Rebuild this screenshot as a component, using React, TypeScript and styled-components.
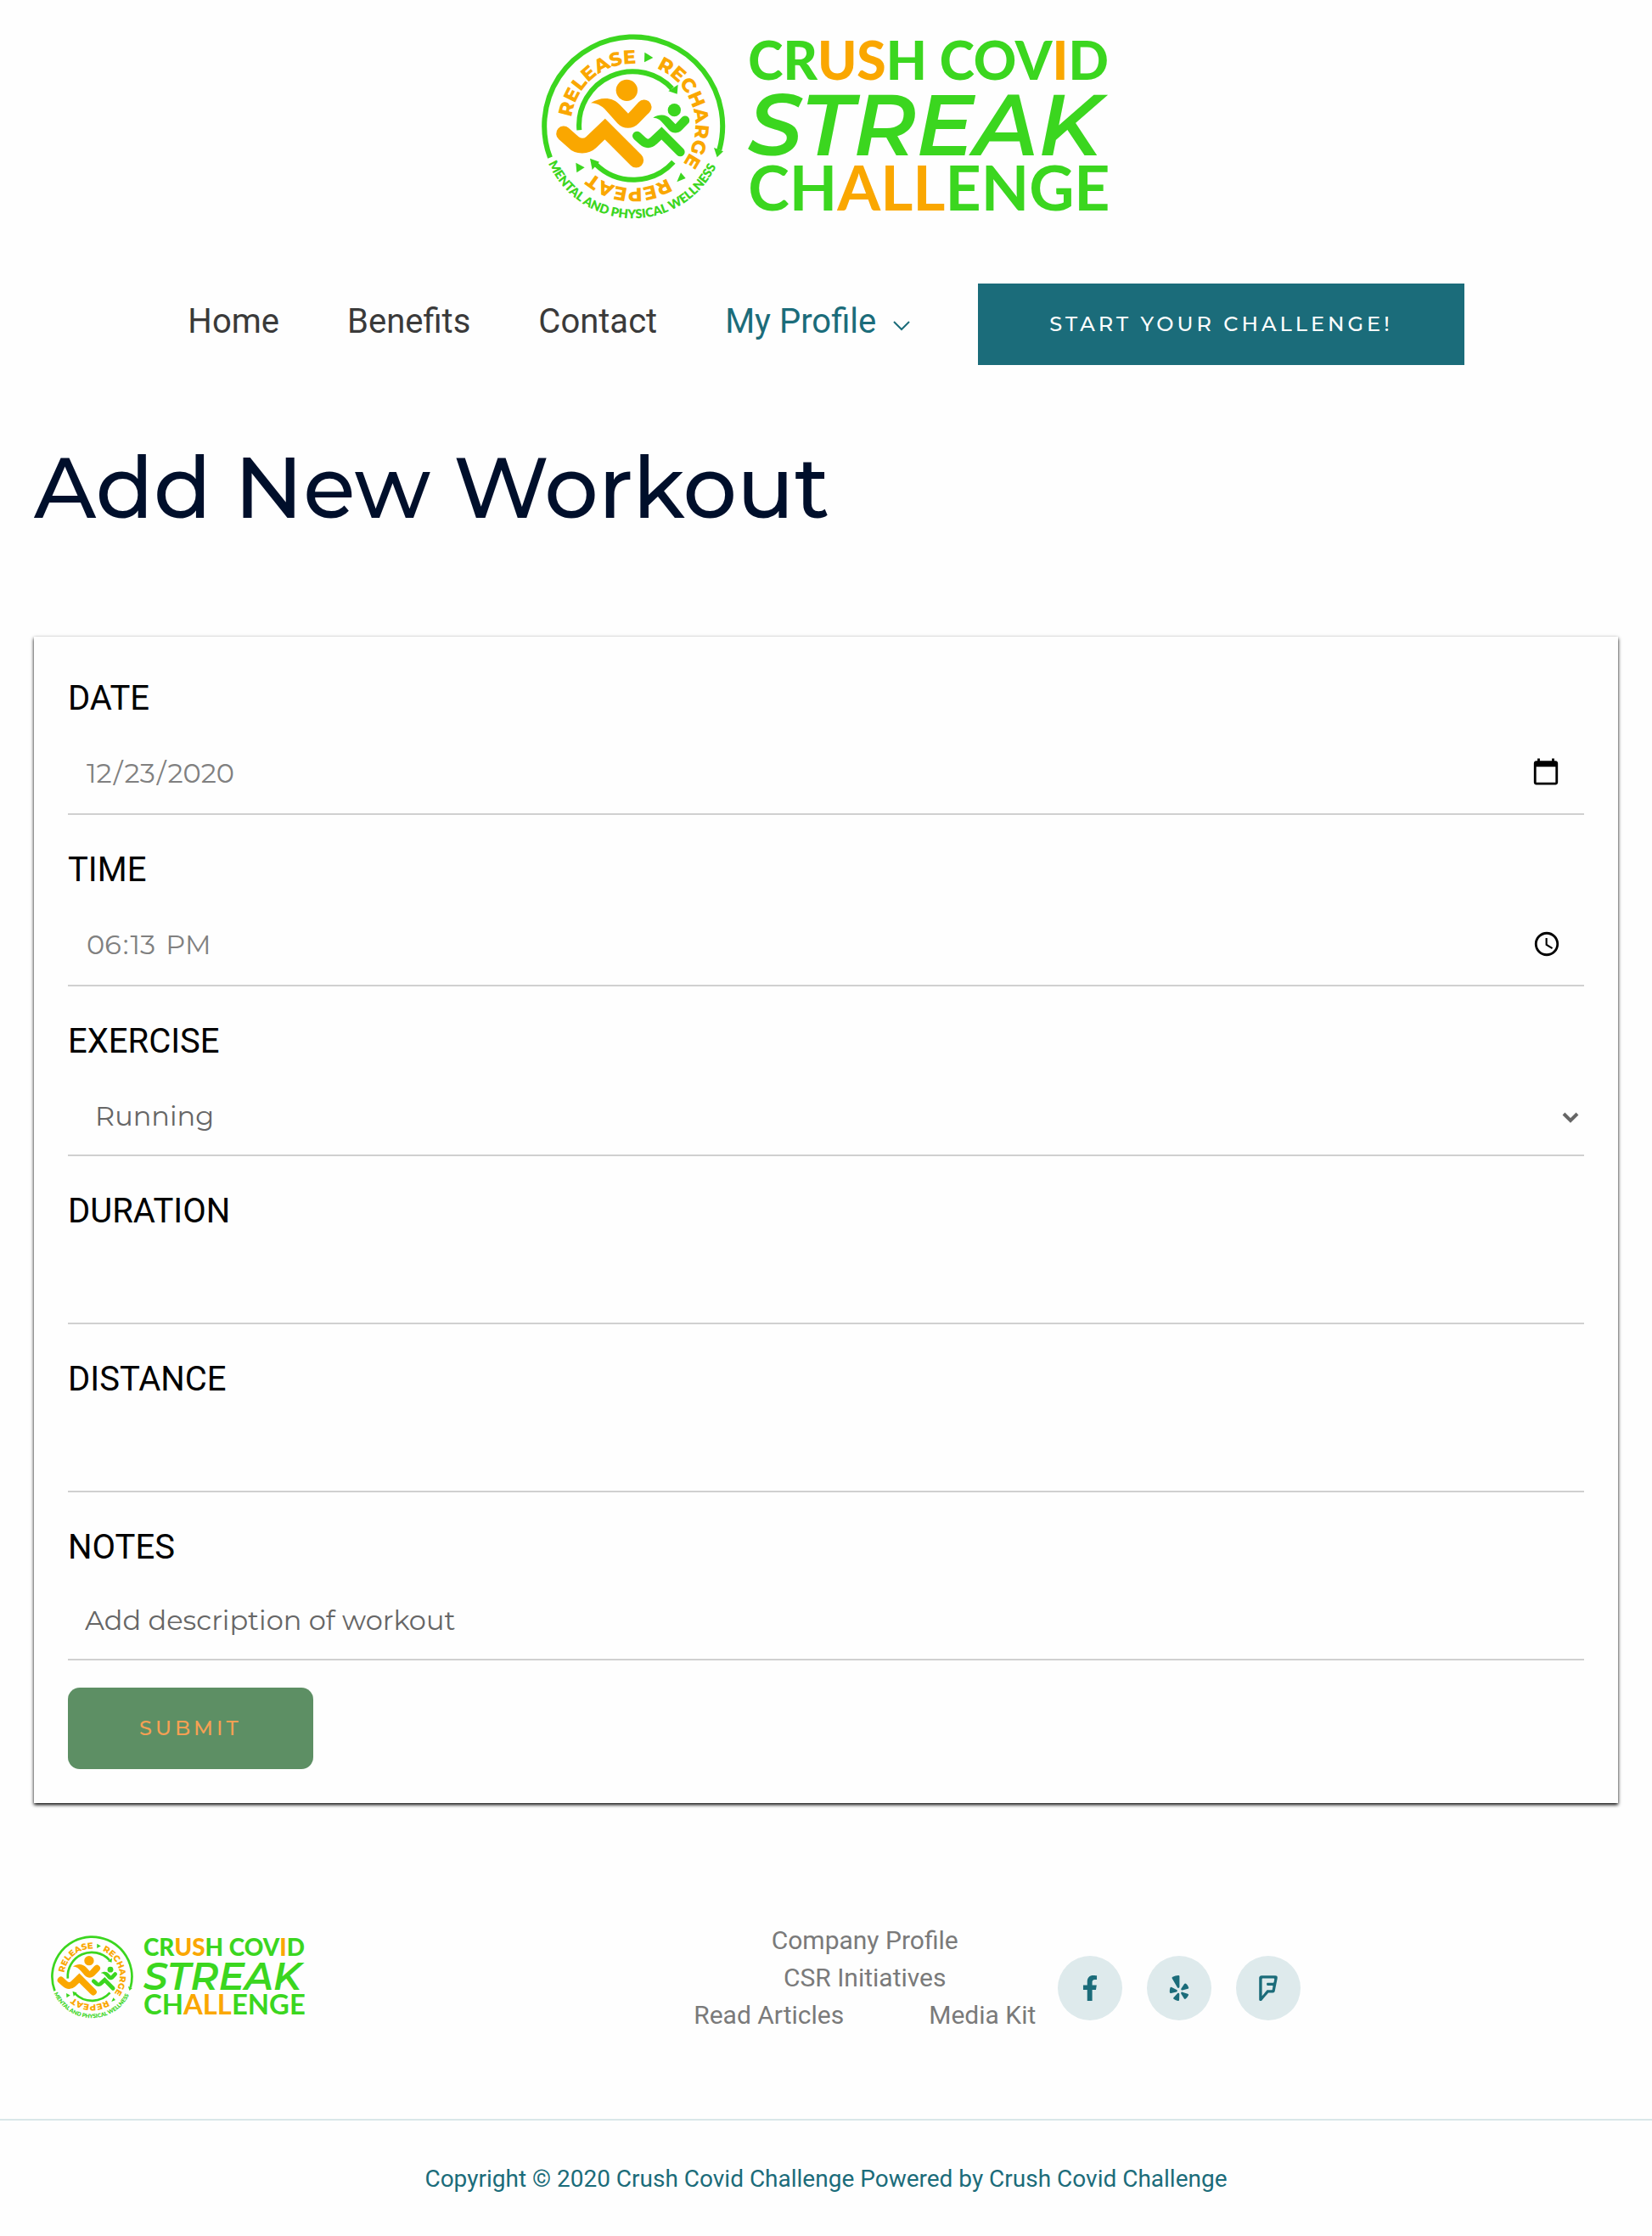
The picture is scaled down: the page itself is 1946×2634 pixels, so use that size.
import React from "react";
import styled, { createGlobalStyle, css } from "styled-components";
import { FaFacebookF, FaFoursquare, FaYelp } from "react-icons/fa";

const teal = "#1b6c7a";
const green = "#3bd61f";
const orange = "#faa700";
const bodyFont = `Roboto, "Liberation Sans", sans-serif`;
const displayFont = `Montserrat, Inter, "Liberation Sans", sans-serif`;

const GlobalStyle = createGlobalStyle`
  *, *::before, *::after { box-sizing: border-box; }
  body {
    margin: 0;
    background: #fefefe;
    color: #3a3a3a;
    font-family: ${bodyFont};
  }
`;

const Header = styled.header`
  display: flex;
  flex-direction: column;
  align-items: center;
  gap: 76px;
  padding-top: 40px;
`;

const LogoLink = styled.a<{ $width: number }>`
  display: block;
  width: ${(p) => p.$width}px;
  max-width: 100%;
  svg { display: block; width: 100%; height: auto; overflow: visible; }
`;

const Nav = styled.nav`
  display: flex;
  flex-wrap: wrap;
  justify-content: center;
  align-items: flex-start;
  gap: 0 80px;
`;

const NavLink = styled.a<{ $active?: boolean }>`
  display: inline-flex;
  align-items: center;
  gap: 20px;
  font-size: 40px;
  line-height: 90px;
  color: ${(p) => (p.$active ? teal : "#3a3a3a")};
  text-decoration: none;
  svg { margin-top: 10px; }
`;

const buttonText = css`
  height: 96px;
  padding: 0 84px;
  border: 0;
  font-family: ${displayFont};
  font-size: 24px;
  font-weight: 500;
  letter-spacing: 4px;
  line-height: 96px;
  text-transform: uppercase;
`;

const CallToAction = styled.a`
  ${buttonText}
  background: ${teal};
  color: #fff;
  text-decoration: none;
`;

const Main = styled.main`
  padding: 0 40px;
`;

const Title = styled.h1`
  margin: 0;
  padding: 84px 0 116px;
  font-family: ${displayFont};
  font-size: 100px;
  font-weight: 500;
  line-height: 120px;
  color: #000f2b;
`;

const Card = styled.form`
  display: flex;
  flex-direction: column;
  gap: 32px;
  padding: 40px;
  background: #fefefe;
  box-shadow: 0 2px 4px #000;
`;

const Field = styled.div`
  display: flex;
  flex-direction: column;
`;

const Label = styled.label`
  font-size: 40px;
  line-height: 66px;
  color: #000;
`;

const controlStyle = css`
  width: 100%;
  border: 0;
  border-bottom: 2px solid #d0d0d0;
  border-radius: 0;
  outline: 0;
  background: transparent;
  font-family: ${displayFont};
  font-size: 32px;
  font-weight: 400;
  color: #666;
`;

const Input = styled.input`
  ${controlStyle}
  height: 100px;
  padding: 6px 20px 0;
  &::placeholder { color: #666; opacity: 1; }
`;

const PickerInput = styled(Input)<{ $icon: number }>`
  height: 104px;
  color: #808080;
  &::-webkit-datetime-edit-month-field,
  &::-webkit-datetime-edit-day-field,
  &::-webkit-datetime-edit-year-field,
  &::-webkit-datetime-edit-hour-field,
  &::-webkit-datetime-edit-minute-field {
    padding: 0 2px;
  }
  &::-webkit-datetime-edit-ampm-field {
    padding: 0 2px 0 6px;
  }
  &::-webkit-calendar-picker-indicator {
    width: ${(p) => p.$icon}px;
    height: ${(p) => p.$icon}px;
    padding: 0;
    margin-right: 7px;
    background-size: contain;
  }
`;

const SelectWrap = styled.div`
  position: relative;
  svg {
    position: absolute;
    right: 6px;
    top: 49px;
    pointer-events: none;
  }
`;

const Select = styled.select`
  ${controlStyle}
  display: block;
  height: 102px;
  padding: 8px 32px 0;
  appearance: none;
`;

const Submit = styled.button`
  ${buttonText}
  align-self: flex-start;
  border-radius: 14px;
  background: #5d8f64;
  color: #f5a053;
`;

const FooterTop = styled.div`
  display: grid;
  grid-template-columns: 8fr 454px 7fr;
  align-items: start;
  padding: 140px 60px 100px;
`;

const FooterLogo = styled.div`
  padding-top: 16px;
`;

const FooterMenu = styled.nav`
  display: flex;
  flex-wrap: wrap;
  justify-content: center;
  column-gap: 100px;
`;

const FooterLink = styled.a`
  font-size: 30px;
  line-height: 44px;
  color: #7a7a7a;
  text-decoration: none;
`;

const Social = styled.div`
  display: flex;
  gap: 29px;
  padding-top: 40px;
`;

const SocialLink = styled.a`
  display: flex;
  align-items: center;
  justify-content: center;
  width: 76px;
  height: 76px;
  border-radius: 50%;
  background: #deeaec;
  color: ${teal};
  font-size: 30px;
`;

const Copyright = styled.p`
  margin: 0;
  padding: 46px 40px 44px;
  border-top: 2px solid #d9e7e9;
  text-align: center;
  font-size: 28px;
  line-height: 46px;
  color: ${teal};
`;

const Word = styled.text`
  font-family: Lato, sans-serif;
  fill: ${green};
`;

const SlantedWord = styled(Word)`
  font-family: ${displayFont};
  font-size: 304px;
  font-style: italic;
  font-weight: 600;
`;

const Tint = styled.tspan`
  fill: ${orange};
`;

const RingWord = styled.text`
  font-family: ${displayFont};
  font-size: 68px;
  font-weight: 800;
  fill: ${orange};
`;

const Motto = styled.text`
  font-family: Lato, sans-serif;
  font-size: 44px;
  font-weight: 800;
  fill: ${green};
`;

const armPath =
  "M228 304C262 281 306 281 332 312L360 341L397 301A26 26 0 0 1 436 336L397 376C375 398 343 398 322 376L290 340C272 318 256 305 228 304Z";

function Logo({ id }: { id: string }) {
  return (
    <svg viewBox="54 60 2010 654" role="img" aria-label="Crush Covid Streak Challenge">
      <defs>
        <path id={`${id}-a`} d="M160 355A220 220 0 0 1 596 355" />
        <path id={`${id}-b`} d="M460 181A220 220 0 0 1 498 569" />
        <path id={`${id}-c`} d="M498 569A220 220 0 0 1 158 385" />
        <path id={`${id}-d`} d="M78 517A327 327 0 0 0 690 480" />
      </defs>
      <g fill="none" stroke={green} strokeWidth="18">
        <path d="M84 497A315 315 0 1 1 682 470" />
        <path d="M187 400A190 190 0 0 1 515 253" />
        <path d="M520 512A190 190 0 0 1 245 520" />
      </g>
      <g fill={green}>
        <path d="M663 462L696 475L674 496Z" />
        <path d="M533 272L536 239L502 262Z" />
        <path d="M225 500L258 512L233 540Z" />
        <path d="M418 125L448 144L417 160Z" />
        <path d="M175 515L206 532L178 550Z" />
        <path d="M546 550L532 583L563 570Z" />
        <circle cx="523" cy="329" r="23" />
        <path d={armPath} transform="translate(311 174) scale(0.6)" />
      </g>
      <path
        d="M391 420L412 439C422 449 438 449 448 439L478 411L544 477"
        fill="none"
        stroke={green}
        strokeWidth="32"
        strokeLinecap="round"
      />
      <circle cx="355" cy="259" r="38" fill={orange} />
      <path d={armPath} fill={orange} />
      <path
        d="M132 412L166 442C182 459 212 459 229 443L278 396L388 506"
        fill="none"
        stroke={orange}
        strokeWidth="53"
        strokeLinecap="round"
      />
      <RingWord><textPath href={`#${id}-a`}>RELEASE</textPath></RingWord>
      <RingWord><textPath href={`#${id}-b`}>RECHARGE</textPath></RingWord>
      <RingWord><textPath href={`#${id}-c`}>REPEAT</textPath></RingWord>
      <Motto><textPath href={`#${id}-d`}>MENTAL AND PHYSICAL WELLNESS</textPath></Motto>
      <Word x="784" y="222" fontSize="187" fontWeight="900">
        CR<Tint>US</Tint>H COV<Tint>I</Tint>D
      </Word>
      <SlantedWord x="784" y="488">STREAK</SlantedWord>
      <Word x="784" y="683" fontSize="220" fontWeight="700">
        CH<Tint>ALL</Tint>ENGE
      </Word>
    </svg>
  );
}

export default function App() {
  return (
    <>
      <GlobalStyle />
      <Header>
        <LogoLink href="#" $width={670}><Logo id="header" /></LogoLink>
        <Nav aria-label="Main">
          <NavLink href="#">Home</NavLink>
          <NavLink href="#">Benefits</NavLink>
          <NavLink href="#">Contact</NavLink>
          <NavLink href="#" $active>
            My Profile
            <svg width="20" height="12" viewBox="0 0 20 12" fill="none" stroke="currentColor" strokeWidth="2">
              <path d="M1 1L10 10L19 1" />
            </svg>
          </NavLink>
          <CallToAction href="#">Start your challenge!</CallToAction>
        </Nav>
      </Header>

      <Main>
        <Title>Add New Workout</Title>
        <Card onSubmit={(e) => e.preventDefault()}>
          <Field>
            <Label htmlFor="date">DATE</Label>
            <PickerInput id="date" type="date" defaultValue="2020-12-23" $icon={36} />
          </Field>
          <Field>
            <Label htmlFor="time">TIME</Label>
            <PickerInput id="time" type="time" defaultValue="18:13" $icon={34} />
          </Field>
          <Field>
            <Label htmlFor="exercise">EXERCISE</Label>
            <SelectWrap>
              <Select id="exercise" defaultValue="Running">
                <option>Running</option>
              </Select>
              <svg width="20" height="16" viewBox="0 0 20 16" fill="none" stroke="#666" strokeWidth="4">
                <path d="M2 3L10 11L18 3" />
              </svg>
            </SelectWrap>
          </Field>
          <Field>
            <Label htmlFor="duration">DURATION</Label>
            <Input id="duration" type="text" />
          </Field>
          <Field>
            <Label htmlFor="distance">DISTANCE</Label>
            <Input id="distance" type="text" />
          </Field>
          <Field>
            <Label htmlFor="notes">NOTES</Label>
            <Input id="notes" type="text" placeholder="Add description of workout" />
          </Field>
          <Submit type="submit">Submit</Submit>
        </Card>
      </Main>

      <footer>
        <FooterTop>
          <FooterLogo>
            <LogoLink href="#" $width={300}><Logo id="footer" /></LogoLink>
          </FooterLogo>
          <FooterMenu aria-label="Footer">
            <FooterLink href="#">Company Profile</FooterLink>
            <FooterLink href="#">CSR Initiatives</FooterLink>
            <FooterLink href="#">Read Articles</FooterLink>
            <FooterLink href="#">Media Kit</FooterLink>
          </FooterMenu>
          <Social>
            <SocialLink href="#" aria-label="Facebook"><FaFacebookF /></SocialLink>
            <SocialLink href="#" aria-label="Yelp"><FaYelp /></SocialLink>
            <SocialLink href="#" aria-label="Foursquare"><FaFoursquare /></SocialLink>
          </Social>
        </FooterTop>
        <Copyright>Copyright © 2020 Crush Covid Challenge Powered by Crush Covid Challenge</Copyright>
      </footer>
    </>
  );
}
